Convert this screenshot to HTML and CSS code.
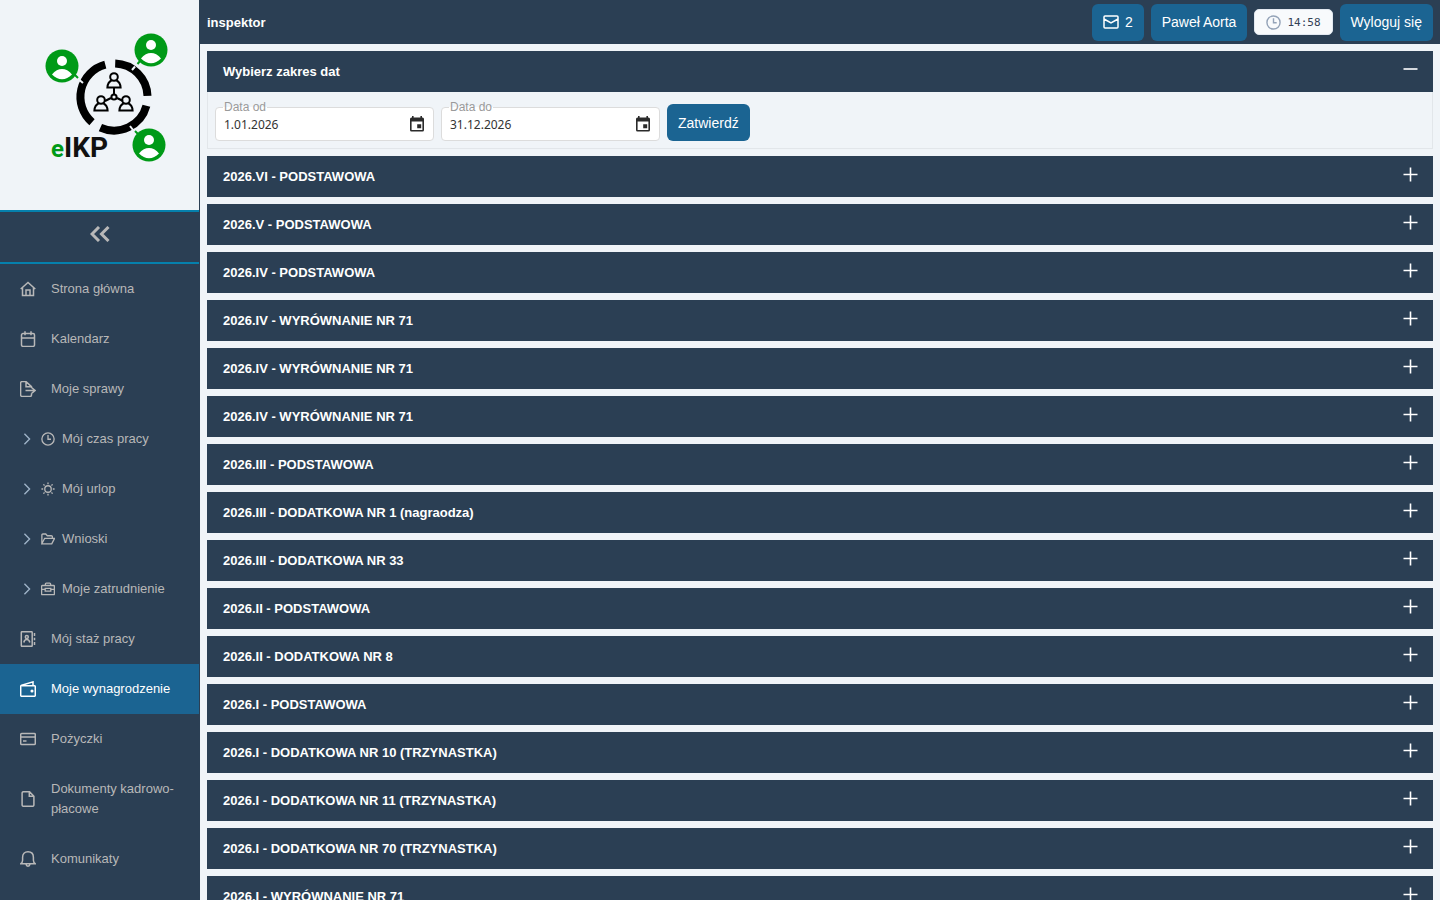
FILE: index.html
```html
<!DOCTYPE html>
<html lang="pl">
<head>
    <meta charset="UTF-8">
    <meta name="viewport" content="width=device-width, initial-scale=1.0">
    <title>eIKP - Moje wynagrodzenie</title>
    <link rel="stylesheet" href="styles.css">
</head>
<body>
    <svg class="sprite" aria-hidden="true">
        <symbol id="plus" viewBox="0 0 15 15"><path d="M7.5 0.5v14M0.5 7.5h14"/></symbol>
        <symbol id="minus" viewBox="0 0 15 15"><path d="M0.5 7h14"/></symbol>
        <symbol id="chevron" viewBox="0 0 8 14"><path d="M1 1l6 6-6 6"/></symbol>
        <symbol id="clock" viewBox="0 0 16 16"><circle cx="8" cy="8" r="7"/><path d="M8 3.5v4.8h3.4"/></symbol>
        <symbol id="calendar" viewBox="0 0 14 16"><path d="M12.5 1.5H12V0h-1.6v1.5H3.6V0H2v1.5h-.5A1.5 1.5 0 0 0 0 3v11a1.5 1.5 0 0 0 1.5 1.5h11A1.5 1.5 0 0 0 14 14V3a1.5 1.5 0 0 0-1.5-1.5zM12.4 13.9H1.6V5.5h10.8zM7.2 8.2h4v4h-4z"/></symbol>
        <symbol id="user" viewBox="0 0 34 34"><circle class="user-disc" cx="17" cy="17" r="16.5"/><circle class="user-shape" cx="17" cy="12" r="5"/><path class="user-shape" d="M7 25.5c3-4 6.5-5.5 10-5.5s7 1.5 10 5.5c-3 3-6.5 4.7-10 4.7s-7-1.7-10-4.7z"/></symbol>
        <symbol id="person" viewBox="0 0 16 17"><circle cx="8" cy="5" r="3.8"/><path d="M5.5 8.5C3 9.6 1.6 11.5 1.4 15.6h13.2c-.2-4.1-1.6-6-4.1-7.1"/></symbol>
    </svg>
    <div class="layout">
        <aside class="sidebar">
            <a class="logo" href="#">
                <svg viewBox="0 0 124 132" role="img" aria-label="eIKP">
                    <g class="ring">
                        <path d="M71.2 31.5A33.5 33.5 0 0 1 103.5 63.8"/>
                        <path d="M102.4 73.7A33.5 33.5 0 0 1 56.4 95.6"/>
                        <path d="M48 90.3A33.5 33.5 0 0 1 61.3 32.6"/>
                    </g>
                    <path class="notches" d="M35.5 48l3.5 3M91 34.5l-3 3.5M86 94l3 4"/>
                    <path class="links" d="M29 41l5 5M97 28l-3.5 4M91 99l4 4"/>
                    <use href="#user" x="1" y="17" width="34" height="34"/>
                    <use href="#user" x="90" y="1" width="34" height="34"/>
                    <use href="#user" x="88" y="96" width="34" height="34"/>
                    <g class="people">
                        <path d="M70 56v7M67 66l-6 3M73 66l6 3"/>
                        <circle cx="70" cy="65" r="2.6"/>
                        <use href="#person" x="62" y="40" width="16" height="17"/>
                        <use href="#person" x="49" y="63" width="16" height="17"/>
                        <use href="#person" x="74" y="63" width="16" height="17"/>
                    </g>
                    <text class="logo-e" x="7" y="125">e</text>
                    <text class="logo-text" x="20" y="125">IKP</text>
                </svg>
            </a>
            <button class="collapse" type="button" aria-label="Zwiń menu">
                <svg viewBox="0 0 20 16"><path d="M9 1L2 8l7 7M18.5 1l-7 7 7 7"/></svg>
            </button>
            <nav class="menu">
                <a class="menu-item" href="#">
                    <svg class="icon" viewBox="0 0 16 16"><path d="M.7 8L8 1.5 15.3 8M2.5 6.8v7.7h11V6.8M6 14.5V9h4v5.5"/></svg>
                    <span>Strona główna</span>
                </a>
                <a class="menu-item" href="#">
                    <svg class="icon" viewBox="0 0 16 16"><path d="M3 2.5h10a1.5 1.5 0 0 1 1.5 1.5v10a1.5 1.5 0 0 1-1.5 1.5H3A1.5 1.5 0 0 1 1.5 14V4A1.5 1.5 0 0 1 3 2.5zM1.5 7h13M5 .3v4M11 .3v4"/></svg>
                    <span>Kalendarz</span>
                </a>
                <a class="menu-item" href="#">
                    <svg class="icon" viewBox="0 0 16 16"><path d="M11.5 12.5V14a1.4 1.4 0 0 1-1.4 1.4H2A1.4 1.4 0 0 1 .6 14V2A1.4 1.4 0 0 1 2 .6h4l5.5 5V7M6 .8v5h5M5.5 9.5H15M11.5 6.5l3.5 3-3.5 3"/></svg>
                    <span>Moje sprawy</span>
                </a>
                <a class="menu-item menu-group" href="#">
                    <svg class="chevron"><use href="#chevron"/></svg>
                    <svg class="icon"><use href="#clock"/></svg>
                    <span>Mój czas pracy</span>
                </a>
                <a class="menu-item menu-group" href="#">
                    <svg class="chevron"><use href="#chevron"/></svg>
                    <svg class="icon" viewBox="0 0 16 16"><circle cx="8" cy="8" r="3.7"/><path d="M8 .5v2M8 13.5v2M.5 8h2M13.5 8h2M2.7 2.7l1.4 1.4M11.9 11.9l1.4 1.4M2.7 13.3l1.4-1.4M11.9 4.1l1.4-1.4"/></svg>
                    <span>Mój urlop</span>
                </a>
                <a class="menu-item menu-group" href="#">
                    <svg class="chevron"><use href="#chevron"/></svg>
                    <svg class="icon" viewBox="0 0 16 16"><path d="M1 13.5v-10a1.2 1.2 0 0 1 1.2-1.2h3.2l1.8 2h4.5A1.2 1.2 0 0 1 13 5.5v1.7M1 13.5h11.3l3.2-6.3H4.2z"/></svg>
                    <span>Wnioski</span>
                </a>
                <a class="menu-item menu-group" href="#">
                    <svg class="chevron"><use href="#chevron"/></svg>
                    <svg class="icon" viewBox="0 0 16 16"><path d="M1.5 4h13a.8.8 0 0 1 .8.8v8.9a.8.8 0 0 1-.8.8h-13a.8.8 0 0 1-.8-.8V4.8a.8.8 0 0 1 .8-.8zM5 4V2.300A1 1 0 0 1 6 1.300h4a1 1 0 0 1 1 1V4M.7 8.500h4.100M11.200 8.500h4.100M4.800 7.300h6.400v3.200H4.800z"/></svg>
                    <span>Moje zatrudnienie</span>
                </a>
                <a class="menu-item" href="#">
                    <svg class="icon" viewBox="0 0 16 16"><path d="M2 .7h9.5a.7.7 0 0 1 .7.7v13.2a.7.7 0 0 1-.7.7H2a.7.7 0 0 1-.7-.7V1.4A.7.7 0 0 1 2 .7zM14.5 2v3M14.5 6.700v2.600M14.500 11v3"/><circle cx="6.800" cy="6" r="1.500"/><path d="M3.800 11.500c.4-2.200 1.500-3 3-3s2.600.8 3 3"/></svg>
                    <span>Mój staż pracy</span>
                </a>
                <a class="menu-item active" href="#" aria-current="page">
                    <svg class="icon" viewBox="0 0 16 16"><path d="M1.800 4.700h12.500a1 1 0 0 1 1 1v8.600a1 1 0 0 1-1 1H1.700a1 1 0 0 1-1-1V5.500c0-.7.4-1 1-1.200L13 .9v3.800"/><circle class="dot" cx="12" cy="10" r=".8"/></svg>
                    <span>Moje wynagrodzenie</span>
                </a>
                <a class="menu-item" href="#">
                    <svg class="icon" viewBox="0 0 16 16"><path d="M1.700 2.500h12.600a1 1 0 0 1 1 1v9a1 1 0 0 1-1 1H1.700a1 1 0 0 1-1-1v-9a1 1 0 0 1 1-1zM.7 6h14.600M3 10h3.500"/></svg>
                    <span>Pożyczki</span>
                </a>
                <a class="menu-item" href="#">
                    <svg class="icon" viewBox="0 0 16 16"><path d="M9.500.7h-6a1.400 1.400 0 0 0-1.400 1.400v11.800a1.400 1.400 0 0 0 1.400 1.400h9a1.400 1.400 0 0 0 1.400-1.400V5.200zM9.300.9v4.400h4.500"/></svg>
                    <span>Dokumenty kadrowo-płacowe</span>
                </a>
                <a class="menu-item" href="#">
                    <svg class="icon" viewBox="0 0 16 16"><path d="M.6 12.800h14.800c-1.500-1-2-2-2-3.600V6.300C13.400 3 11.400.8 8 .8S2.600 3 2.600 6.300v2.900c0 1.600-.5 2.600-2 3.600zM6 13.200c.2 1.300.9 2 2 2s1.800-.7 2-2"/></svg>
                    <span>Komunikaty</span>
                </a>
            </nav>
        </aside>
        <div class="page">
            <header class="topbar">
                <strong class="role">inspektor</strong>
                <button class="btn" type="button" aria-label="Wiadomości: 2">
                    <svg class="mail" viewBox="0 0 16 14"><path d="M2 1h12a1 1 0 0 1 1 1v10a1 1 0 0 1-1 1H2a1 1 0 0 1-1-1V2a1 1 0 0 1 1-1zM1 4l7 4 7-4"/></svg>
                    <span>2</span>
                </button>
                <button class="btn" type="button">Paweł Aorta</button>
                <div class="timer">
                    <svg class="timer-icon"><use href="#clock"/></svg>
                    <time>14:58</time>
                </div>
                <button class="btn" type="button">Wyloguj się</button>
            </header>
            <main class="content">
                <section class="panel">
                    <button class="panel-header" type="button" aria-expanded="true"><span>Wybierz zakres dat</span><svg><use href="#minus"/></svg></button>
                    <form class="panel-body">
                        <div class="field">
                            <label for="date-from">Data od</label>
                            <input id="date-from" type="text" value="1.01.2026">
                            <button class="picker" type="button" aria-label="Wybierz datę od"><svg><use href="#calendar"/></svg></button>
                        </div>
                        <div class="field">
                            <label for="date-to">Data do</label>
                            <input id="date-to" type="text" value="31.12.2026">
                            <button class="picker" type="button" aria-label="Wybierz datę do"><svg><use href="#calendar"/></svg></button>
                        </div>
                        <button class="btn" type="button">Zatwierdź</button>
                    </form>
                </section>
                <button class="panel-header" type="button"><span>2026.VI - PODSTAWOWA</span><svg><use href="#plus"/></svg></button>
                <button class="panel-header" type="button"><span>2026.V - PODSTAWOWA</span><svg><use href="#plus"/></svg></button>
                <button class="panel-header" type="button"><span>2026.IV - PODSTAWOWA</span><svg><use href="#plus"/></svg></button>
                <button class="panel-header" type="button"><span>2026.IV - WYRÓWNANIE NR 71</span><svg><use href="#plus"/></svg></button>
                <button class="panel-header" type="button"><span>2026.IV - WYRÓWNANIE NR 71</span><svg><use href="#plus"/></svg></button>
                <button class="panel-header" type="button"><span>2026.IV - WYRÓWNANIE NR 71</span><svg><use href="#plus"/></svg></button>
                <button class="panel-header" type="button"><span>2026.III - PODSTAWOWA</span><svg><use href="#plus"/></svg></button>
                <button class="panel-header" type="button"><span>2026.III - DODATKOWA NR 1 (nagraodza)</span><svg><use href="#plus"/></svg></button>
                <button class="panel-header" type="button"><span>2026.III - DODATKOWA NR 33</span><svg><use href="#plus"/></svg></button>
                <button class="panel-header" type="button"><span>2026.II - PODSTAWOWA</span><svg><use href="#plus"/></svg></button>
                <button class="panel-header" type="button"><span>2026.II - DODATKOWA NR 8</span><svg><use href="#plus"/></svg></button>
                <button class="panel-header" type="button"><span>2026.I - PODSTAWOWA</span><svg><use href="#plus"/></svg></button>
                <button class="panel-header" type="button"><span>2026.I - DODATKOWA NR 10 (TRZYNASTKA)</span><svg><use href="#plus"/></svg></button>
                <button class="panel-header" type="button"><span>2026.I - DODATKOWA NR 11 (TRZYNASTKA)</span><svg><use href="#plus"/></svg></button>
                <button class="panel-header" type="button"><span>2026.I - DODATKOWA NR 70 (TRZYNASTKA)</span><svg><use href="#plus"/></svg></button>
                <button class="panel-header" type="button"><span>2026.I - WYRÓWNANIE NR 71</span><svg><use href="#plus"/></svg></button>
            </main>
        </div>
    </div>
</body>
</html>
```
FILE: styles.css
```css
* {
    box-sizing: border-box;
}

body {
    margin: 0;
    font-family: 'Liberation Sans', Arial, sans-serif;
    font-size: 13px;
    background-color: #f0f4f8;
}

button {
    font-family: inherit;
    border: none;
    cursor: pointer;
}

svg {
    display: block;
    flex-shrink: 0;
    fill: none;
    stroke: currentColor;
}

.sprite {
    position: absolute;
    width: 0;
    height: 0;
}

.layout {
    display: flex;
    height: 100vh;
}

/* Sidebar */

.sidebar {
    width: 200px;
    flex-shrink: 0;
    overflow: hidden;
    background-color: #2b3f54;
    border-right: 1px solid #2b3f54;
}

.logo {
    display: block;
    padding: 32px 31px 46px 44px;
    background-color: #f0f4f8;
}

.ring {
    stroke: #000;
    stroke-width: 8px;
}

.notches {
    stroke: #f0f4f8;
    stroke-width: 2px;
}

.links {
    stroke: #009a17;
    stroke-width: 2px;
}

.people {
    stroke: #000;
    stroke-width: 2px;
}

.user-disc {
    fill: #009a17;
    stroke: none;
}

.user-shape {
    fill: #fff;
    stroke: none;
}

.logo-e,
.logo-text {
    font-family: Roboto, sans-serif;
    font-weight: 700;
    stroke: none;
}

.logo-e {
    font-size: 24px;
    fill: #009a17;
}

.logo-text {
    font-size: 28px;
    fill: #111;
}

.collapse {
    display: flex;
    justify-content: center;
    width: 100%;
    height: 54px;
    padding: 14px 0 0;
    color: #b8b8b8;
    background: none;
    border-top: 2px solid #0580ac;
    border-bottom: 2px solid #0580ac;
}

.collapse svg {
    width: 20px;
    height: 16px;
    stroke-width: 3px;
}

.menu-item {
    display: flex;
    align-items: center;
    gap: 15px;
    padding: 15px 20px;
    line-height: 20px;
    color: #b8b8b8;
    text-decoration: none;
}

.menu-item.active {
    color: #fff;
    background-color: #1b6492;
}

.icon {
    width: 16px;
    height: 16px;
    stroke-width: 1.5;
}

.dot {
    fill: currentColor;
}

.menu-group {
    gap: 7px;
    padding-left: 23px;
}

.menu-group .icon {
    width: 14px;
    height: 14px;
}

.chevron {
    width: 8px;
    height: 12px;
    margin-right: 3px;
    color: #9fb3c8;
    stroke-width: 1.6;
}

/* Top bar */

.page {
    display: flex;
    flex-direction: column;
    flex: 1;
    min-width: 0;
}

.topbar {
    display: flex;
    align-items: center;
    gap: 7px;
    flex-shrink: 0;
    height: 44px;
    padding: 0 7px;
    background-color: #2b3f54;
}

.role {
    margin-right: auto;
    color: #fff;
}

.btn {
    display: flex;
    align-items: center;
    gap: 6px;
    height: 37px;
    padding: 0 11px;
    font-size: 14px;
    color: #fff;
    background-color: #1b6492;
    border-radius: 6px;
}

.mail {
    width: 16px;
    height: 14px;
    stroke-width: 1.5;
}

.timer {
    display: flex;
    align-items: center;
    gap: 6px;
    height: 26px;
    padding: 0 11px;
    font-family: 'DejaVu Sans Mono', monospace;
    font-size: 11px;
    color: #334155;
    background-color: #f8fafc;
    border: 1px solid #e2e8f0;
    border-radius: 5px;
}

.timer-icon {
    width: 15px;
    height: 15px;
    color: #94a3b8;
    stroke-width: 1.5;
}

/* Panels */

.content {
    display: flex;
    flex-direction: column;
    gap: 7px;
    flex: 1;
    min-height: 0;
    padding: 7px;
    overflow-y: auto;
    scrollbar-width: none;
}

.panel-header {
    display: flex;
    align-items: center;
    justify-content: space-between;
    flex-shrink: 0;
    width: 100%;
    height: 41px;
    padding: 0 15px 0 16px;
    font-size: 13px;
    font-weight: 700;
    color: #fff;
    background-color: #2b3f54;
}

.panel-header svg {
    width: 15px;
    height: 15px;
    margin-bottom: 4px;
    stroke-width: 1.6;
}

.panel-body {
    display: flex;
    align-items: flex-end;
    gap: 7px;
    padding: 12px 7px 7px;
    border: 1px solid #e2e6ea;
    border-top: none;
}

.field {
    position: relative;
    display: flex;
    align-items: center;
    width: 219px;
    height: 34px;
    padding: 0 8px;
    background-color: #fff;
    border: 1px solid #dcdcdc;
    border-radius: 4px;
}

/* label sits on the top border of its field */
.field label {
    position: absolute;
    top: -8px;
    left: 7px;
    padding: 0 1px;
    font-size: 12px;
    line-height: 14px;
    color: #9a9a9a;
    background: linear-gradient(#f0f4f8 50%, #fff 50%);
}

.field input {
    flex: 1;
    min-width: 0;
    padding: 0;
    font-family: 'Noto Sans', sans-serif;
    font-size: 12px;
    color: #333;
    background: none;
    border: none;
    outline: none;
}

.picker {
    padding: 0 1px;
    color: #2b2b2b;
    background: none;
}

.picker svg {
    width: 14px;
    height: 16px;
    fill: currentColor;
    fill-rule: evenodd;
    stroke: none;
}
```
